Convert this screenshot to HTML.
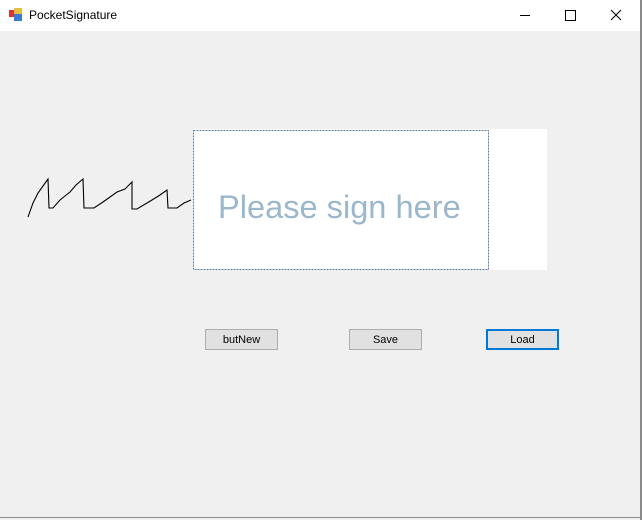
<!DOCTYPE html>
<html><head><style>
body{margin:0;width:642px;height:520px;overflow:hidden;background:#f0f0f0;font-family:"Liberation Sans",sans-serif;position:relative}
.title{position:absolute;left:0;top:0;width:642px;height:31px;background:#fff}
.t{position:absolute;left:29px;top:8px;font-size:12px;color:#000}
.btn{position:absolute;top:329px;width:71px;height:19px;background:#e1e1e1;border:1px solid #adadad;font-size:11px;text-align:center;line-height:21px;box-sizing:content-box}
</style></head><body>
<div class="title"></div>
<svg style="position:absolute;left:9px;top:8px" width="14" height="14"><rect x="0" y="2" width="6" height="7" fill="#d33"/><rect x="5" y="0" width="8" height="7" fill="#e8c040"/><rect x="5" y="6" width="8" height="7" fill="#3a7bd5"/></svg>
<div class="t">PocketSignature</div>
<svg style="position:absolute;left:0;top:0" width="642" height="520">
<line x1="520" y1="15.5" x2="530" y2="15.5" stroke="#000"/>
<rect x="565.5" y="10.5" width="10" height="10" fill="none" stroke="#000"/>
<path d="M611 10l10 10M621 10l-10 10" stroke="#000"/>
<rect x="640" y="0" width="2" height="520" fill="#8a8a8a"/>
<rect x="0" y="517" width="642" height="1" fill="#8a8a8a"/>
<rect x="193" y="129" width="354" height="141" fill="#fff"/>
<rect x="193.5" y="130.5" width="295" height="139" fill="none" stroke="#5a7fa0" stroke-width="1" stroke-dasharray="2,1"/>
<text x="218" y="218" font-size="32.6" fill="#9bb7cc" font-family="Liberation Sans, sans-serif">Please sign here</text>
<polyline fill="none" stroke="#000" stroke-width="1.1" points="28,217 33,203 38,193 43,186 48,179 49,208 53,208 60,200 70,192 76,185 83,179 84,208 94,208 103,202 117,192 125,189 132,182 132,209 137,209 152,200 160,195 167,190 168,208 177,208 184,203 191,200"/>
</svg>
<div class="btn" style="left:205px">butNew</div>
<div class="btn" style="left:349px">Save</div>
<div class="btn" style="left:486px;border:2px solid #0078d7;top:329px;width:69px;height:17px;line-height:19px">Load</div>
</body></html>
